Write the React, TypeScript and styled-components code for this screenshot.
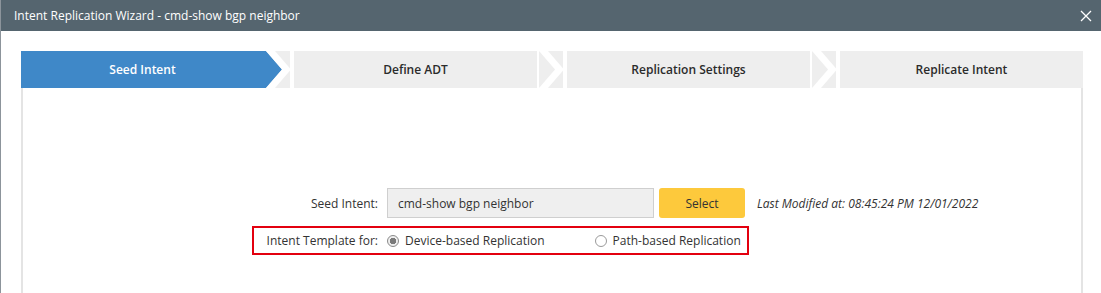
import { Fragment } from 'react';
import styled, { createGlobalStyle } from 'styled-components';

const GlobalStyle = createGlobalStyle`
    html, body {
        margin: 0;
        padding: 0;
        background: #8c949b;
        font-family: 'Open Sans', 'Noto Sans', sans-serif;
    }
`;

const Dialog = styled.div`
    margin-left: 1px;
    width: 1100px;
    height: 293px;
    background: #ffffff;
    display: flex;
    flex-direction: column;
    overflow: hidden;
`;

const TitleBar = styled.div`
    height: 31px;
    flex: none;
    background: #55656f;
    color: #ffffff;
    display: flex;
    align-items: center;
    justify-content: space-between;
    padding: 0 9px 0 13px;
    font-size: 12px;
`;

const CloseButton = styled.button`
    border: 0;
    background: transparent;
    padding: 0;
    width: 12px;
    height: 12px;
    display: flex;
    cursor: pointer;
`;

const Body = styled.div`
    flex: 1;
    display: flex;
    flex-direction: column;
    padding: 20px 18px 0 20px;
`;

const Steps = styled.div`
    display: flex;
    height: 37px;
    flex: none;
`;

const Step = styled.div<{ $active?: boolean }>`
    flex: 1;
    display: flex;
    align-items: center;
    justify-content: center;
    background: ${p => (p.$active ? '#3f88c8' : '#eeeeee')};
    color: ${p => (p.$active ? '#ffffff' : '#2b2b2b')};
    font-size: 12px;
    font-weight: 600;
`;

const Panel = styled.div`
    flex: 1;
    border-left: 2px solid #e4e4e4;
    border-right: 2px solid #e4e4e4;
    padding: 100px 0 0 229px;
    display: flex;
    flex-direction: column;
    gap: 8px;
    font-size: 12px;
    color: #333333;
`;

const Row = styled.div`
    display: flex;
    align-items: center;
    padding-left: 2px;
`;

const TemplateRow = styled(Row)`
    align-self: flex-start;
    height: 25px;
    padding: 0 6px 0 0;
    border: 2px solid #e3000f;
`;

const Label = styled.span`
    width: 124px;
    text-align: right;
    margin-right: 9px;
`;

const Input = styled.div`
    box-sizing: border-box;
    width: 267px;
    height: 30px;
    display: flex;
    align-items: center;
    padding-left: 10px;
    background: #efefef;
    border: 1px solid #cfcfcf;
    color: #333333;
`;

const SelectButton = styled.button`
    width: 86px;
    height: 30px;
    margin-left: 5px;
    border: 0;
    border-radius: 3px;
    background: #fdc93c;
    color: #333333;
    font-family: inherit;
    font-size: 12px;
`;

const Modified = styled.span`
    margin-left: 12px;
    font-style: italic;
    font-size: 12px;
    color: #333333;
`;

const RadioOption = styled.label`
    display: flex;
    align-items: center;
    gap: 6px;
    margin-right: 50px;

    &:last-child {
        margin-right: 0;
    }
`;

const RadioDot = styled.span<{ $checked?: boolean }>`
    box-sizing: border-box;
    width: 12px;
    height: 12px;
    border-radius: 50%;
    border: 1px solid ${p => (p.$checked ? '#8a8a8a' : '#9a9a9a')};
    background: ${p => (p.$checked ? 'radial-gradient(circle, #7a7a7a 0 3px, #eeeeee 3.5px)' : '#ffffff')};
`;

const steps = ['Seed Intent', 'Define ADT', 'Replication Settings', 'Replicate Intent'];

// chevron cell between two steps; the blue arrow tip only shows after the active step
const Separator = ({ prevActive }: { prevActive: boolean }) => (
    <svg width="30" height="37" viewBox="0 0 30 37" style={{ flex: 'none', display: 'block' }}>
        <rect x="0" y="0" width="30" height="37" fill="#ffffff" />
        <rect x="2" y="0" width="24" height="37" fill="#eeeeee" />
        {prevActive && <polygon points="0,0 2,0 18,18.5 2,37 0,37" fill="#3f88c8" />}
        <polygon points="2,0 11,0 27,18.5 11,37 2,37 18,18.5" fill="#ffffff" />
    </svg>
);

export default function App() {
    return (
        <>
            <GlobalStyle />
            <Dialog>
                <TitleBar>
                    <span>Intent Replication Wizard - cmd-show bgp neighbor</span>
                    <CloseButton aria-label="Close">
                        <svg width="12" height="12" viewBox="0 0 12 12">
                            <path d="M1 1 L11 11 M11 1 L1 11" stroke="#ffffff" strokeWidth="1.3" />
                        </svg>
                    </CloseButton>
                </TitleBar>
                <Body>
                    <Steps>
                        {steps.map((s, i) => (
                            <Fragment key={s}>
                                {i > 0 && <Separator prevActive={i === 1} />}
                                <Step $active={i === 0}>{s}</Step>
                            </Fragment>
                        ))}
                    </Steps>
                    <Panel>
                        <Row>
                            <Label>Seed Intent:</Label>
                            <Input>cmd-show bgp neighbor</Input>
                            <SelectButton>Select</SelectButton>
                            <Modified>Last Modified at: 08:45:24 PM 12/01/2022</Modified>
                        </Row>
                        <TemplateRow>
                            <Label>Intent Template for:</Label>
                            <RadioOption>
                                <RadioDot $checked />
                                Device-based Replication
                            </RadioOption>
                            <RadioOption>
                                <RadioDot />
                                Path-based Replication
                            </RadioOption>
                        </TemplateRow>
                    </Panel>
                </Body>
            </Dialog>
        </>
    );
}
